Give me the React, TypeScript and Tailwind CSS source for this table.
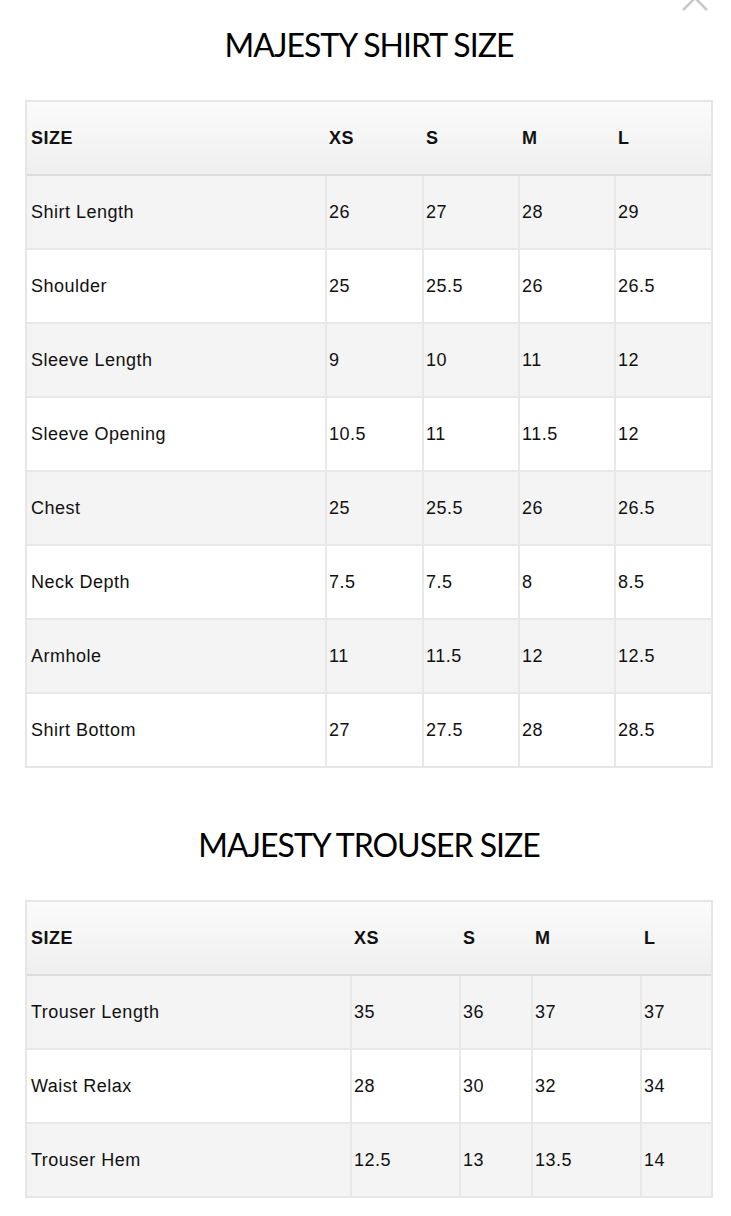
import React from 'react';

type Table = {
  title: string;
  cols: number[];
  sizes: string[];
  rows: [string, string[]][];
};

const shirt: Table = {
  title: 'MAJESTY SHIRT SIZE',
  cols: [300, 97, 96, 96, 95],
  sizes: ['XS', 'S', 'M', 'L'],
  rows: [
    ['Shirt Length', ['26', '27', '28', '29']],
    ['Shoulder', ['25', '25.5', '26', '26.5']],
    ['Sleeve Length', ['9', '10', '11', '12']],
    ['Sleeve Opening', ['10.5', '11', '11.5', '12']],
    ['Chest', ['25', '25.5', '26', '26.5']],
    ['Neck Depth', ['7.5', '7.5', '8', '8.5']],
    ['Armhole', ['11', '11.5', '12', '12.5']],
    ['Shirt Bottom', ['27', '27.5', '28', '28.5']],
  ],
};

const trouser: Table = {
  title: 'MAJESTY TROUSER SIZE',
  cols: [325, 109, 72, 109, 69],
  sizes: ['XS', 'S', 'M', 'L'],
  rows: [
    ['Trouser Length', ['35', '36', '37', '37']],
    ['Waist Relax', ['28', '30', '32', '34']],
    ['Trouser Hem', ['12.5', '13', '13.5', '14']],
  ],
};

const SizeTable: React.FC<{ data: Table }> = ({ data }) => {
  return (
    <div className="flex flex-col">
      <h2 className="text-center ml-[25px] w-[688px] text-[32px] leading-[40px] text-black tracking-[-1px] font-['Lato',sans-serif] font-normal">
        {data.title}
      </h2>
      <div className="mt-[35px] ml-[25px] w-[688px] border-2 border-[#e6e6e6] text-[18px] tracking-[0.5px] text-[#111] font-['Liberation_Sans',Arial,sans-serif]">
        <div className="flex h-[74px] border-b-2 border-[#dcdcdc] bg-gradient-to-b from-[#fbfbfb] to-[#efefef] font-bold">
          <div style={{ width: data.cols[0] - 2 }} className="flex items-center pl-1">SIZE</div>
          {data.sizes.map((s, i) => (
            <div key={s} style={{ width: data.cols[i + 1] }} className="flex items-center pl-1">{s}</div>
          ))}
        </div>
        {data.rows.map(([label, vals], r) => (
          <div
            key={label}
            className={
              'flex ' +
              (r % 2 === 0 ? 'bg-[#f4f4f4] ' : 'bg-white ') +
              (r < data.rows.length - 1 ? 'h-[74px] border-b-2 border-[#e8e8e8]' : 'h-[72px]')
            }
          >
            <div style={{ width: data.cols[0] - 2 }} className="flex items-center pl-1">{label}</div>
            {vals.map((v, i) => (
              <div
                key={i}
                style={{ width: data.cols[i + 1] }}
                className="flex items-center pl-[2px] border-l-2 border-[#e8e8e8]"
              >
                {v}
              </div>
            ))}
          </div>
        ))}
      </div>
    </div>
  );
};

export default function App() {
  return (
    <div className="relative w-[731px] h-[1216px] bg-white overflow-hidden">
      <svg className="absolute left-[680px] top-[-17px]" width="30" height="30" viewBox="0 0 30 30">
        <path d="M3 3 L27 27 M27 3 L3 27" stroke="#c8c8c8" strokeWidth="2.5" />
      </svg>
      <div className="pt-[25px]">
        <SizeTable data={shirt} />
      </div>
      <div className="pt-[57px]">
        <SizeTable data={trouser} />
      </div>
    </div>
  );
}
